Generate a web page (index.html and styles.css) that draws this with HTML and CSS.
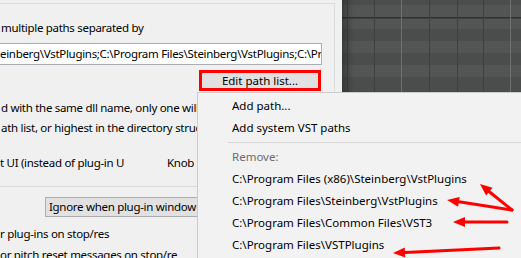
FILE: index.html
```html
<!DOCTYPE html>
<html>
<head>
<meta charset="utf-8">
<link rel="stylesheet" href="styles.css">
</head>
<body>
<div class="app">
  <section class="group">
    <div class="label">multiple paths separated by</div>
    <div class="field">einberg\VstPlugins;C:\Program Files\Steinberg\VstPlugins;C:\Program Files\Common Files\VST3</div>
    <button class="btn-edit">Edit path list...</button>
    <p class="note">d with the same dll name, only one will<br>ath list, or highest in the directory struct</p>
    <div class="row-ui"><span class="ui-label">t UI (instead of plug-in U</span><span class="knob">Knob</span></div>
    <hr class="sep">
    <div class="combo">Ignore when plug-in window i</div>
    <div class="check first">r plug-ins on stop/res</div>
    <div class="check">or pitch reset messages on stop/re</div>
  </section>
  <div class="arrange">
    <svg width="179" height="92" viewBox="0 0 179 92">
      <defs>
        <linearGradient id="shade" x1="0" x2="1" y1="0" y2="0">
          <stop offset="0" stop-color="#000" stop-opacity="0.28"/>
          <stop offset="1" stop-color="#000" stop-opacity="0"/>
        </linearGradient>
      </defs>
      <rect width="179" height="92" fill="#4b4d4c"/>
      <rect y="5" width="179" height="24" fill="#535554"/>
      <rect y="41" width="179" height="12" fill="#535554"/>
      <rect y="65" width="179" height="12" fill="#535554"/>
      <rect y="17" width="179" height="1.5" fill="#2e2f2e"/>
      <g fill="#3d3f3e">
        <rect x="5" width="1" height="92"/>
        <rect x="32" width="1" height="92"/>
        <rect x="87" width="1" height="92"/>
        <rect x="115" width="1" height="92"/>
        <rect x="141" width="1" height="92"/>
      </g>
      <g fill="#6e706f">
        <rect x="59" width="1" height="92"/>
        <rect x="168" width="1" height="92"/>
      </g>
      <rect width="12" height="92" fill="url(#shade)"/>
    </svg>
  </div>
</div>

<div class="menu">
  <div class="item">Add path...</div>
  <div class="item">Add system VST paths</div>
  <div class="menu-sep"></div>
  <div class="item disabled">Remove:</div>
  <div class="item">C:\Program Files (x86)\Steinberg\VstPlugins</div>
  <div class="item">C:\Program Files\Steinberg\VstPlugins</div>
  <div class="item">C:\Program Files\Common Files\VST3</div>
  <div class="item">C:\Program Files\VSTPlugins</div>
</div>

<svg class="arrows" width="521" height="258" viewBox="0 0 521 258">
  <g stroke="#f00" stroke-width="3" stroke-linecap="round" fill="none">
    <line x1="512" y1="210" x2="489" y2="191.5"/>
    <line x1="512" y1="210" x2="459" y2="201.8"/>
    <line x1="507" y1="222" x2="465" y2="222"/>
    <line x1="499" y1="248" x2="405" y2="252.4"/>
  </g>
  <g fill="#f00">
    <polygon points="480,184 492.5,187.7 486.1,195.5"/>
    <polygon points="447,200 459.7,196.9 458.1,206.7"/>
    <polygon points="453,222 465,217 465,227"/>
    <polygon points="393,253 405.2,257.4 404.8,247.4"/>
  </g>
</svg>
</body>
</html>
```
FILE: styles.css
```css
html, body {
  margin: 0;
  padding: 0;
}
body {
  width: 521px;
  height: 258px;
  overflow: hidden;
  position: relative;
  background: #f0f0f0;
  font-family: "Noto Sans", "Open Sans", sans-serif;
  font-size: 11.5px;
  color: #000;
}
.app {
  display: flex;
  align-items: flex-start;
  height: 258px;
  overflow: hidden;
}
.group {
  box-sizing: border-box;
  width: 335px;
  height: 255px;
  overflow: hidden;
  margin-top: 3px;
  border-top: 1px solid #dcdcdc;
  border-right: 1px solid #dcdcdc;
  padding: 0 12px 0 0;
  display: flex;
  flex-direction: column;
  flex-shrink: 0;
  letter-spacing: -0.3px;
}
.label {
  margin-top: 16px;
  line-height: 16px;
  padding-left: 1px;
  white-space: nowrap;
}
.field {
  margin-top: 7px;
  height: 22px;
  flex-shrink: 0;
  box-sizing: border-box;
  background: #fff;
  border: 1px solid #abadb3;
  border-left: none;
  line-height: 20px;
  white-space: nowrap;
  overflow: hidden;
}
.btn-edit {
  align-self: flex-end;
  flex-shrink: 0;
  margin: 5px 1px 0 0;
  width: 122px;
  height: 21px;
  box-sizing: border-box;
  border: 3px solid #f00;
  background: #e1e1e1;
  font: inherit;
  letter-spacing: 0;
  line-height: 13px;
  padding: 0;
  color: #000;
}
.note {
  margin: 7px 0 0;
  line-height: 20px;
  padding-left: 1px;
  white-space: nowrap;
}
.row-ui {
  margin-top: 15px;
  line-height: 20px;
  display: flex;
  white-space: nowrap;
}
.ui-label {
  width: 167px;
  flex-shrink: 0;
}
.sep {
  margin: 13px 0 0;
  border: none;
  border-top: 1px solid #d9d9d9;
  height: 0;
  flex-shrink: 0;
}
.combo {
  margin: 10px 0 0 45px;
  height: 20px;
  flex-shrink: 0;
  box-sizing: border-box;
  border: 1px solid #adadad;
  background: #e1e1e1;
  padding-left: 3px;
  line-height: 18px;
  white-space: nowrap;
}
.check {
  line-height: 21px;
  white-space: nowrap;
  flex-shrink: 0;
}
.check.first {
  margin-top: 6px;
}
.arrange {
  margin-left: 7px;
  flex: 1;
  height: 92px;
  overflow: hidden;
}
.arrange svg {
  display: block;
}
.menu {
  position: absolute;
  left: 197px;
  top: 92px;
  right: 0;
  bottom: 0;
  box-sizing: border-box;
  background: #f2f2f2;
  border-top: 1px solid #cccccc;
  border-left: 1px solid #cccccc;
  padding-top: 2px;
  overflow: hidden;
}
.item {
  height: 22px;
  line-height: 22px;
  padding-left: 34px;
  white-space: nowrap;
}
.item.disabled {
  color: #6d6d6d;
}
.menu-sep {
  height: 7px;
  margin-left: 30px;
  background: linear-gradient(#d7d7d7, #d7d7d7) no-repeat 0 3px / 100% 1px;
}
.arrows {
  position: absolute;
  left: 0;
  top: 0;
  pointer-events: none;
}
```
